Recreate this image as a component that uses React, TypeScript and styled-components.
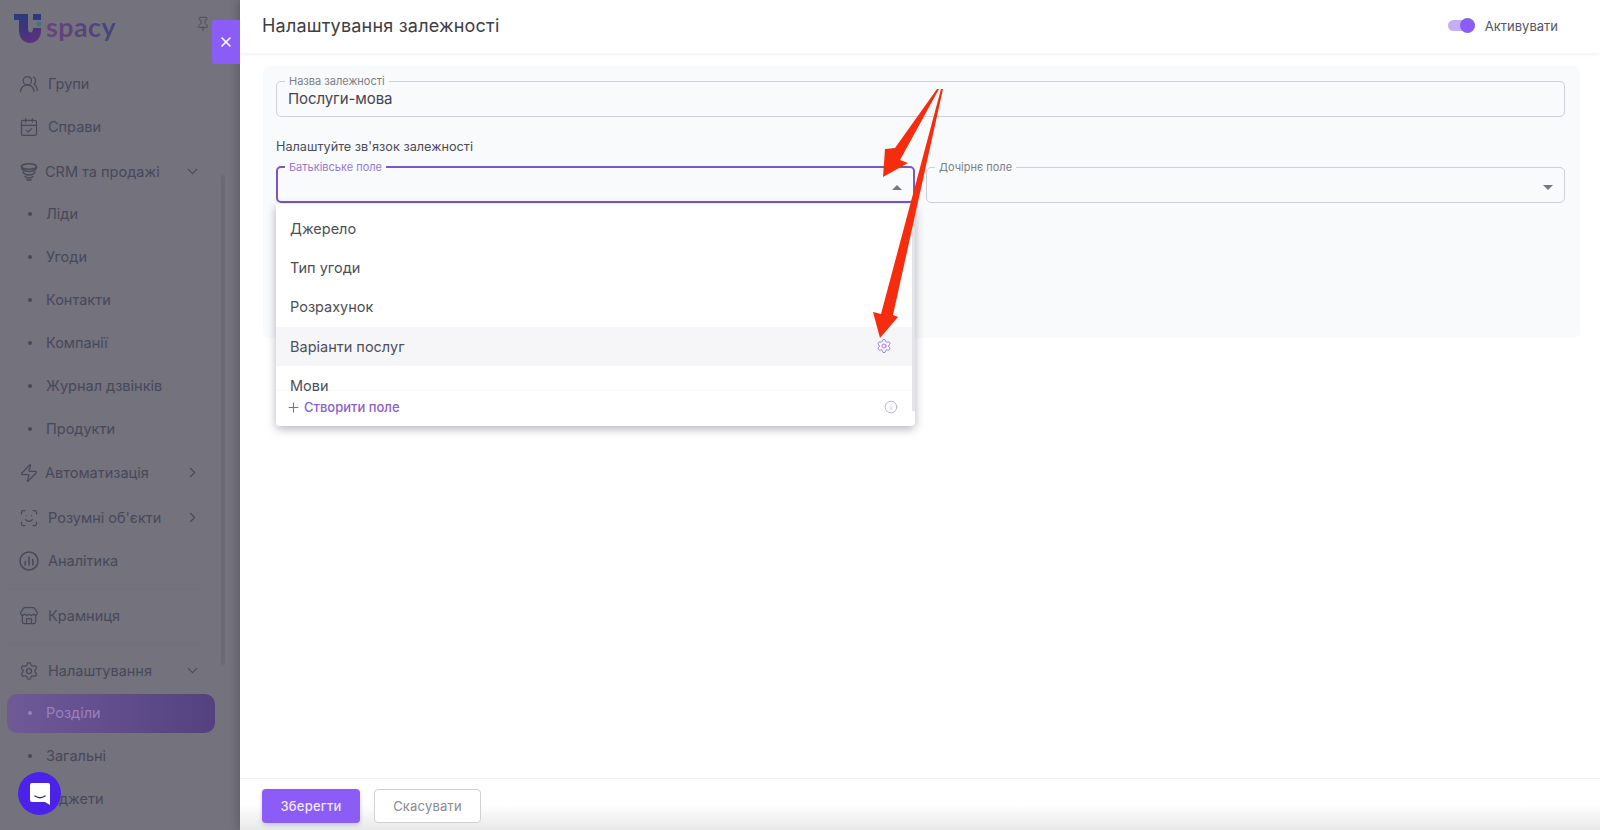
import styled, { createGlobalStyle } from "styled-components";
import {
  CalendarCheck,
  ChevronDown,
  ChevronRight,
  Info,
  Pin,
  Plus,
  ScanFace,
  Settings,
  Store,
  UsersRound,
  X,
  Zap,
} from "lucide-react";
import type { ReactNode } from "react";

const GlobalStyle = createGlobalStyle`
  html, body {
    margin: 0;
    height: 100%;
    overflow: hidden;
    background: #fff;
    font-family: "Inter", "Noto Sans", sans-serif;
  }
  * { box-sizing: border-box; }
`;

const StackIcon = () => (
  <svg width="20" height="20" viewBox="0 0 20 20" fill="none" stroke="currentColor" strokeWidth="1.5" strokeLinecap="round">
    <ellipse cx="10" cy="4.5" rx="7.5" ry="2.8" />
    <path d="M2.5 5c0 2.6 3 4.4 7.5 4.4s7.5-1.8 7.5-4.4" />
    <path d="M4 10c.8 2 3 3 6 3s5.200-1 6-3" />
    <path d="M6 14.500c.8 1 2.200 1.500 4 1.500s3.200-.5 4-1.500" />
    <path d="M8 18h4" />
  </svg>
);

const ChartIcon = () => (
  <svg width="20" height="20" viewBox="0 0 20 20" fill="none" stroke="currentColor" strokeWidth="1.5" strokeLinecap="round">
    <circle cx="10" cy="10" r="9" />
    <path d="M6.200 10.500v3.500M10 6v8M13.800 8.500v5.500" />
  </svg>
);

type NavItem = {
  label: string;
  icon?: ReactNode;
  chevron?: "down" | "right";
  tight?: boolean;
  sub?: boolean;
  active?: boolean;
  divider?: boolean;
  pushed?: boolean;
};

const navItems: NavItem[] = [
  { label: "Групи", icon: <UsersRound size={20} strokeWidth={1.5} /> },
  { label: "Справи", icon: <CalendarCheck size={20} strokeWidth={1.5} /> },
  { label: "CRM та продажі", icon: <StackIcon />, chevron: "down", tight: true, pushed: true },
  { label: "Ліди", sub: true },
  { label: "Угоди", sub: true },
  { label: "Контакти", sub: true },
  { label: "Компанії", sub: true },
  { label: "Журнал дзвінків", sub: true },
  { label: "Продукти", sub: true },
  { label: "Автоматизація", icon: <Zap size={20} strokeWidth={1.5} />, chevron: "right", tight: true },
  { label: "Розумні об'єкти", icon: <ScanFace size={20} strokeWidth={1.5} />, chevron: "right", pushed: true },
  { label: "Аналітика", icon: <ChartIcon />, divider: true },
  { label: "Крамниця", icon: <Store size={20} strokeWidth={1.5} />, divider: true },
  { label: "Налаштування", icon: <Settings size={20} strokeWidth={1.5} />, chevron: "down" },
  { label: "Розділи", sub: true, active: true },
  { label: "Загальні", sub: true },
  { label: "Віджети", sub: true },
];

const fieldOptions = ["Джерело", "Тип угоди", "Розрахунок", "Варіанти послуг", "Мови"];

export default function App() {
  return (
    <Page>
      <GlobalStyle />
      <Sidebar>
        <Brand>
          <LogoMark width="27" height="29" viewBox="0 0 27 29">
            <defs>
              <linearGradient id="logoU" x1="0" y1="0" x2="0.4" y2="1">
                <stop offset="0" stopColor="#3a5cff" />
                <stop offset="0.55" stopColor="#5a55ff" />
                <stop offset="1" stopColor="#b747ff" />
              </linearGradient>
            </defs>
            <path d="M0 0h14v15c0 2 1 3.500 2.500 3.500S19 17 19 15v-1h8v3c0 7-5 12-11 12S5 24 5 16V6H0z" fill="url(#logoU)" />
            <path d="M19 0h8v6h-8z" fill="#3a5cff" />
            <circle cx="25" cy="10" r="2.400" fill="#7dffff" />
          </LogoMark>
          <LogoText>spacy</LogoText>
          <PinIcon size={16} strokeWidth={1.4} />
        </Brand>
        <Nav>
          {navItems.map((item) => (
            <NavEntry key={item.label} $pushed={item.pushed}>
              <NavRow $sub={item.sub} $active={item.active} $tight={item.tight}>
                {item.sub ? <Dot /> : item.icon}
                <NavLabel>{item.label}</NavLabel>
                {item.chevron === "down" && <ChevronSlot><ChevronDown size={17} strokeWidth={1.6} /></ChevronSlot>}
                {item.chevron === "right" && <ChevronSlot><ChevronRight size={17} strokeWidth={1.6} /></ChevronSlot>}
              </NavRow>
              {item.divider && <NavDivider />}
            </NavEntry>
          ))}
        </Nav>
        <ScrollThumb />
        <Scrim />
        <CloseButton aria-label="Закрити">
          <X size={16} strokeWidth={2.4} />
        </CloseButton>
        <ChatBubble aria-label="Чат">
          <svg width="22" height="24" viewBox="0 0 22 24">
            <path d="M3 1h16a2 2 0 0 1 2 2v20l-5-3H3a2 2 0 0 1-2-2V3a2 2 0 0 1 2-2z" fill="#fff" />
            <path d="M6 14c3 2 7 2 10 0" fill="none" stroke="#2f2f55" strokeWidth="1.4" strokeLinecap="round" />
          </svg>
        </ChatBubble>
      </Sidebar>

      <Panel>
        <PanelHeader>
          <Title>Налаштування залежності</Title>
          <ToggleWrap>
            <Toggle>
              <ToggleThumb />
            </Toggle>
            <ToggleLabel>Активувати</ToggleLabel>
          </ToggleWrap>
        </PanelHeader>

        <PanelBody>
          <Card>
            <Field>
              <Legend>Назва залежності</Legend>
              <FieldValue>Послуги-мова</FieldValue>
            </Field>
            <SectionLabel>Налаштуйте зв'язок залежності</SectionLabel>
            <SelectRow>
              <SelectWrap>
                <Field $focused>
                  <Legend $focused>Батьківське поле</Legend>
                  <Caret $up />
                </Field>
                <Dropdown>
                  <OptionList>
                    {fieldOptions.map((option, i) => (
                      <Option key={option} $hover={i === 3}>
                        {option}
                        {i === 3 && <Settings size={16} strokeWidth={1.5} color="#a07ee6" />}
                      </Option>
                    ))}
                  </OptionList>
                  <DropdownFooter>
                    <CreateLink>
                      <Plus size={15} strokeWidth={1.8} />
                      Створити поле
                    </CreateLink>
                    <Info size={14} strokeWidth={1.3} color="#a8a4c4" />
                  </DropdownFooter>
                  <DropdownScrollbar />
                </Dropdown>
              </SelectWrap>
              <SelectWrap>
                <Field>
                  <Legend>Дочірнє поле</Legend>
                  <Caret />
                </Field>
              </SelectWrap>
            </SelectRow>
          </Card>
        </PanelBody>

        <PanelFooter>
          <SaveButton>Зберегти</SaveButton>
          <CancelButton>Скасувати</CancelButton>
        </PanelFooter>
      </Panel>

      <Annotation width="1600" height="830" viewBox="0 0 1600 830">
        <path d="M937 89 L895 148 L885 149 L883 177 L908 163 L900 160 L939 89 Z" fill="#f52c0e" />
        <path d="M941 89 L881 314 L873 312 L880 338 L898 317 L893 315 L943 89 Z" fill="#f52c0e" />
      </Annotation>
    </Page>
  );
}

const Page = styled.div`
  position: relative;
  display: flex;
  width: 1600px;
  height: 830px;
  overflow: hidden;
`;

const Sidebar = styled.aside`
  position: relative;
  flex: 0 0 240px;
  height: 830px;
  overflow: hidden;
  background: #fff;
  color: #83889a;
`;

const Brand = styled.div`
  display: flex;
  align-items: center;
  height: 62px;
  padding: 0 0 6px 14px;
`;

const LogoMark = styled.svg`
  flex: none;
  margin-right: 5px;
`;

const LogoText = styled.span`
  font-family: "Lato", sans-serif;
  font-size: 27px;
  font-weight: 700;
  letter-spacing: 0.4px;
  background: linear-gradient(90deg, #e078ff, #7d80ff);
  -webkit-background-clip: text;
  background-clip: text;
  color: transparent;
  padding-bottom: 4px;
`;

const PinIcon = styled(Pin)`
  margin: -8px 29px 0 auto;
`;

const Nav = styled.nav`
  display: flex;
  flex-direction: column;
`;

const NavEntry = styled.div<{ $pushed?: boolean }>`
  display: flex;
  flex-direction: column;
  margin-top: ${(p) => (p.$pushed ? "2px" : "0")};
`;

const NavRow = styled.div<{ $sub?: boolean; $active?: boolean; $tight?: boolean }>`
  position: relative;
  z-index: ${(p) => (p.$active ? 2 : "auto")};
  display: flex;
  align-items: center;
  height: ${(p) => (p.$active ? "39px" : "43px")};
  margin: ${(p) => (p.$active ? "2px 25px 2px 7px" : "0")};
  padding: ${(p) => (p.$sub ? "0 39px 2px" : "0 39px 0")};
  padding-left: ${(p) => (p.$active ? "21px" : p.$sub ? "28px" : "19px")};
  gap: ${(p) => (p.$sub ? "14px" : p.$tight ? "6px" : "9px")};
  border-radius: 10px;
  font-size: 14.5px;
  color: ${(p) => (p.$active ? "#9a7fc0" : "#83889a")};
  background: ${(p) => (p.$active ? "linear-gradient(90deg, #6f5a98, #54417f)" : "transparent")};
  svg {
    flex: none;
  }
`;

const Dot = styled.span`
  width: 4px;
  height: 4px;
  border-radius: 50%;
  background: currentColor;
`;

const NavLabel = styled.span`
  white-space: nowrap;
`;

const ChevronSlot = styled.span`
  display: flex;
  margin-left: auto;
`;

const NavDivider = styled.div`
  height: 1px;
  margin: 7px 35px 4px 8px;
  background: #f5f5f8;
`;

const ScrollThumb = styled.div`
  position: absolute;
  top: 175px;
  left: 221px;
  width: 4px;
  height: 490px;
  border-radius: 3px;
  background: #e4e5ea;
`;

const Scrim = styled.div`
  position: absolute;
  inset: 0;
  z-index: 1;
  background: rgba(40, 38, 56, 0.65);
`;

const CloseButton = styled.button`
  position: absolute;
  top: 20px;
  right: 0;
  z-index: 3;
  display: flex;
  align-items: center;
  justify-content: center;
  width: 28px;
  height: 44px;
  padding: 0;
  border: none;
  border-radius: 3px 0 0 3px;
  background: #8b5cf6;
  color: #fff;
`;

const ChatBubble = styled.div`
  position: absolute;
  left: 18px;
  top: 772px;
  z-index: 3;
  display: flex;
  align-items: center;
  justify-content: center;
  width: 43px;
  height: 43px;
  border-radius: 50%;
  background: #4a22e8;
`;

const Panel = styled.main`
  position: relative;
  display: flex;
  flex-direction: column;
  flex: 1;
  min-width: 0;
  height: 830px;
  background: #fff;
  box-shadow: -3px 0 8px rgba(20, 20, 30, 0.25);
`;

const PanelHeader = styled.header`
  display: flex;
  align-items: center;
  justify-content: space-between;
  height: 53px;
  padding: 0 42px 2px 22px;
  box-shadow: 0 1px 4px rgba(30, 30, 60, 0.08);
`;

const Title = styled.h1`
  margin: 0;
  font-size: 18px;
  font-weight: 400;
  letter-spacing: 0.2px;
  color: #3d3d46;
`;

const ToggleWrap = styled.div`
  display: flex;
  align-items: center;
  gap: 10px;
`;

const Toggle = styled.div`
  position: relative;
  width: 27px;
  height: 11px;
  border-radius: 6px;
  background: #c4aef5;
`;

const ToggleThumb = styled.span`
  position: absolute;
  top: -2px;
  right: 0;
  width: 15px;
  height: 15px;
  border-radius: 50%;
  background: #8b5cf6;
`;

const ToggleLabel = styled.span`
  font-size: 13px;
  color: #55555f;
`;

const PanelBody = styled.div`
  flex: 1;
  padding: 13px 20px 0 23px;
`;

const Card = styled.section`
  height: 272px;
  padding: 9px 15px 0 13px;
  border-radius: 6px;
  background: #f9fafc;
`;

const Field = styled.fieldset<{ $focused?: boolean }>`
  position: relative;
  display: flex;
  align-items: center;
  height: 42px;
  margin: 0;
  padding: 0 11px;
  min-width: 0;
  border: ${(p) => (p.$focused ? "2px solid #7a57c2" : "1px solid #cdced6")};
  border-radius: 5px;
`;

const Legend = styled.legend<{ $focused?: boolean }>`
  padding: 0 4px;
  margin-left: ${(p) => (p.$focused ? "-4px" : "-3px")};
  font-size: 11px;
  line-height: 12px;
  color: ${(p) => (p.$focused ? "#9a78d6" : "#7d7d86")};
`;

const FieldValue = styled.span`
  margin-top: -6px;
  font-size: 15px;
  letter-spacing: -0.1px;
  color: #45454f;
`;

const SectionLabel = styled.div`
  margin: 20px 0 4px;
  font-size: 12.7px;
  line-height: 20px;
  color: #4b4b55;
`;

const SelectRow = styled.div`
  display: grid;
  grid-template-columns: 1fr 1fr;
  gap: 11px;
`;

const SelectWrap = styled.div`
  position: relative;
`;

const Caret = styled.span<{ $up?: boolean }>`
  width: 0;
  height: 0;
  margin-left: auto;
  border-left: 5px solid transparent;
  border-right: 5px solid transparent;
  border-top: ${(p) => (p.$up ? "none" : "5px solid #77777f")};
  border-bottom: ${(p) => (p.$up ? "5px solid #77777f" : "none")};
`;

const Dropdown = styled.div`
  position: absolute;
  top: calc(100% + 1px);
  left: 0;
  z-index: 5;
  display: flex;
  flex-direction: column;
  width: 639px;
  height: 222px;
  border-radius: 0 0 4px 4px;
  background: #fff;
  box-shadow: 0 3px 10px rgba(40, 40, 70, 0.35);
  overflow: hidden;
`;

const OptionList = styled.div`
  flex: 1;
  min-height: 0;
  padding-top: 5px;
  margin-right: 3px;
  overflow: hidden;
`;

const Option = styled.div<{ $hover?: boolean }>`
  display: flex;
  align-items: center;
  justify-content: space-between;
  height: 39.200px;
  padding: 0 20px 0 14px;
  font-size: 14.5px;
  color: #4e4e58;
  background: ${(p) => (p.$hover ? "#f6f6f9" : "transparent")};
`;

const DropdownFooter = styled.div`
  display: flex;
  align-items: center;
  justify-content: space-between;
  flex: none;
  height: 35px;
  padding: 0 17px 3px 10px;
  background: #fff;
  box-shadow: 0 -1px 2px rgba(40, 40, 70, 0.04);
`;

const DropdownScrollbar = styled.div`
  position: absolute;
  top: 0;
  right: 0;
  bottom: 15px;
  width: 3px;
  background: #e4e4ea;
`;

const CreateLink = styled.span`
  display: flex;
  align-items: center;
  gap: 3px;
  font-size: 13px;
  font-weight: 500;
  color: #8a5fc9;
`;

const PanelFooter = styled.footer`
  display: flex;
  gap: 14px;
  height: 52px;
  padding: 10px 22px 0;
  border-top: 1px solid #f2f2f5;
  background: linear-gradient(180deg, #fff 50%, #e8e8e8 100%);
`;

const SaveButton = styled.button`
  width: 98px;
  height: 34px;
  border: none;
  border-radius: 4px;
  background: #8b5cf6;
  font-family: inherit;
  font-size: 13px;
  font-weight: 500;
  letter-spacing: 0.2px;
  color: #f0e8fd;
  box-shadow: 0 2px 4px rgba(90, 60, 180, 0.25);
`;

const CancelButton = styled.button`
  width: 107px;
  height: 34px;
  border: 1px solid #cfcfd4;
  border-radius: 4px;
  background: #fff;
  font-family: inherit;
  font-size: 13px;
  letter-spacing: 0.2px;
  color: #8a8a90;
`;

const Annotation = styled.svg`
  position: absolute;
  top: 0;
  left: 0;
  z-index: 10;
  pointer-events: none;
`;
